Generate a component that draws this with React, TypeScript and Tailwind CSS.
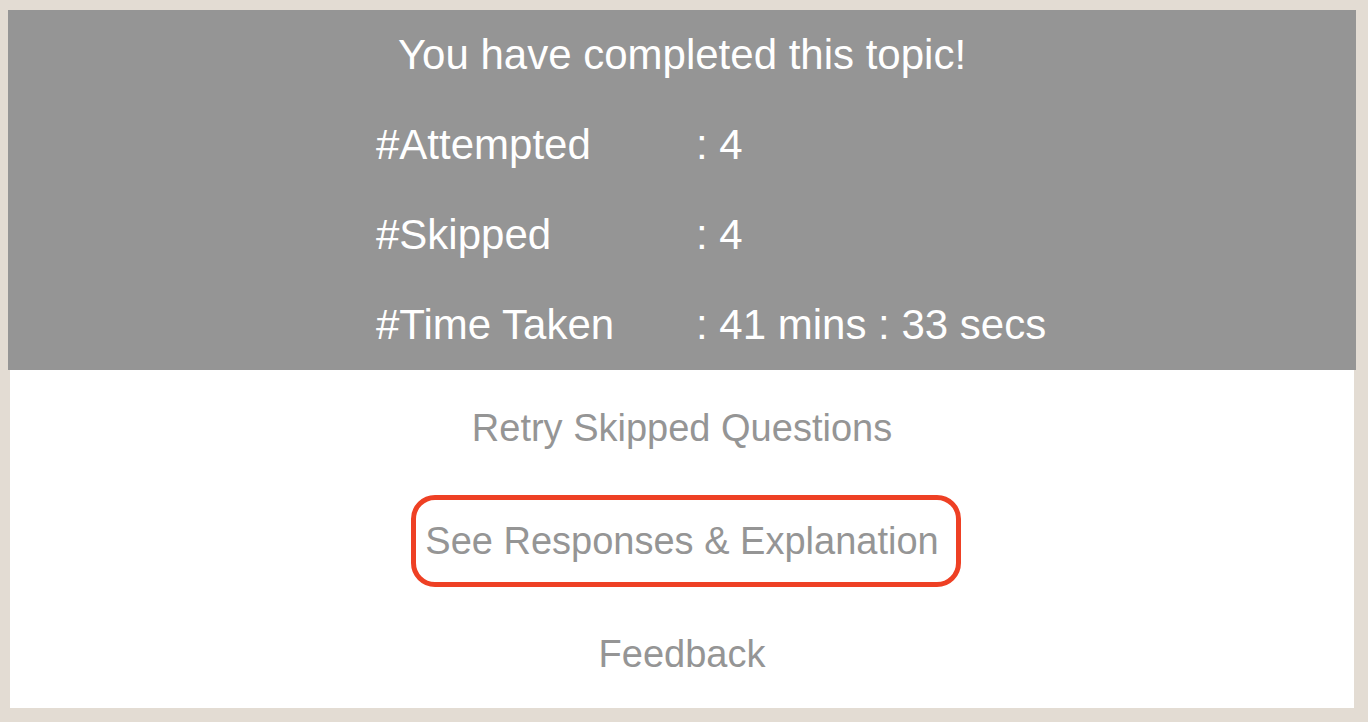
const stats = [
  { label: "#Attempted", value: ": 4" },
  { label: "#Skipped", value: ": 4" },
  { label: "#Time Taken", value: ": 41 mins : 33 secs" },
];

const actions = [
  { label: "Retry Skipped Questions", highlighted: false },
  { label: "See Responses & Explanation", highlighted: true },
  { label: "Feedback", highlighted: false },
];

export default function App() {
  return (
    <main className="min-h-screen bg-[#e3dcd3] pt-[10px] pr-3 pb-[14px] pl-2 font-['Liberation_Sans',sans-serif]">
      <section className="bg-[#959595] text-[42px] leading-[90px] text-white">
        <h1 className="text-center">You have completed this topic!</h1>
        <dl className="mx-auto w-[612px]">
          {stats.map((s) => (
            <div key={s.label} className="flex whitespace-nowrap">
              <dt className="w-[320px] shrink-0">{s.label}</dt>
              <dd>{s.value}</dd>
            </div>
          ))}
        </dl>
      </section>
      <nav className="mx-[2px] flex flex-col items-center gap-[21px] bg-white pt-3 pb-2 text-[38px] text-[#959595]">
        {actions.map((a) => (
          <button key={a.label} type="button" className="relative h-[92px] px-2">
            {a.label}
            {a.highlighted && (
              <span
                aria-hidden="true"
                className="absolute inset-y-0 -right-[14px] -left-[6px] rounded-[24px] border-[5px] border-[#ee4024]"
              />
            )}
          </button>
        ))}
      </nav>
    </main>
  );
}
